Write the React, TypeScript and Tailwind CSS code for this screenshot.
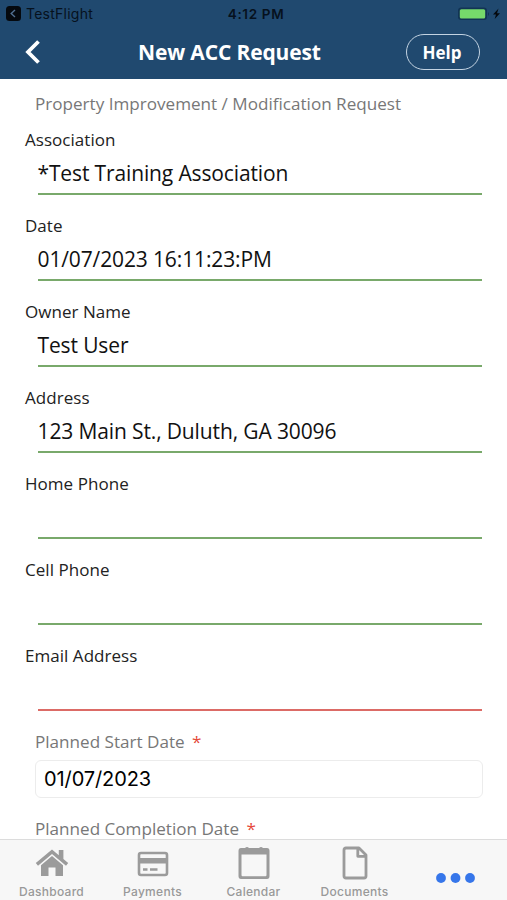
type FieldProps = { label: string; value: string; error?: boolean };

function Field({ label, value, error }: FieldProps) {
  return (
    <div className="flex h-[86px] flex-col">
      <div className="h-6 pl-[25px] text-[17px] leading-6 tracking-[0.04px] text-[#222]">{label}</div>
      <div
        className={`mr-[25px] ml-[37.5px] flex h-[43px] items-center border-b-2 text-[21px] leading-8 tracking-[-0.13px] text-[#111] ${
          error ? "border-[#dc6b66]" : "border-[#79a96b]"
        }`}
      >
        {value}
      </div>
    </div>
  );
}

const fields: FieldProps[] = [
  { label: "Association", value: "*Test Training Association" },
  { label: "Date", value: "01/07/2023 16:11:23:PM" },
  { label: "Owner Name", value: "Test User" },
  { label: "Address", value: "123 Main St., Duluth, GA 30096" },
  { label: "Home Phone", value: "" },
  { label: "Cell Phone", value: "" },
  { label: "Email Address", value: "", error: true },
];

function StatusBar() {
  return (
    <div className="flex h-[27px] items-center font-['Inter',sans-serif] text-[#06111d]">
      <div className="flex flex-1 items-center pl-[6px]">
        <svg width="15" height="15" viewBox="0 0 15 15">
          <rect width="15" height="15" rx="3.5" fill="#05090e" />
          <path d="M9 4 5.2 7.5 9 11" fill="none" stroke="#517092" strokeWidth="1.4" />
        </svg>
        <span className="ml-[5px] text-[14px] tracking-[0.25px]">TestFlight</span>
      </div>
      <span className="pt-px pl-[3px] text-[13.5px] font-semibold tracking-[0.65px]">4:12 PM</span>
      <div className="flex flex-1 justify-end pr-[4px]">
        <svg width="45" height="14" viewBox="0 0 45 14">
          <rect x="0" y="0.5" width="29" height="12.500" rx="3.2" fill="#123454" />
          <rect x="1.8" y="2.2" width="25.400" height="9.400" rx="1.6" fill="#76da6b" />
          <path d="M30 5q2 2 0 4z" fill="#123454" />
          <path d="M40.5 1.500 35 7.6h3L36.7 12 42 6.3h-3z" fill="#05090e" />
        </svg>
      </div>
    </div>
  );
}

function RequiredLabel({ text }: { text: string }) {
  return (
    <div className="pl-[35px] text-[17.1px] leading-6 whitespace-pre text-[#777]">
      {text} <span className="ml-[3px] text-[#e5493a]">*</span>
    </div>
  );
}

function HouseIcon() {
  return (
    <svg width="34" height="28" viewBox="0 0 34 28" fill="#9b9b9b">
      <path d="M.8 14 17 .6l6.8 5.6V1h4.6v9L33.2 14l-2.2 2.7L17 5 3 16.700z" />
      <path d="M6 16.200 17 7l11 9.200V27h-7.500v-8.500h-7V27H6z" />
    </svg>
  );
}

function CardIcon() {
  return (
    <svg className="mt-[2px]" width="32" height="26" viewBox="0 0 32 26">
      <rect x="2" y="2" width="28" height="22" rx="2" fill="none" stroke="#9b9b9b" strokeWidth="2.6" />
      <path d="M2 7h28v5.500H2z" fill="#9b9b9b" />
      <path d="M6 18.500h4.500M13 18.500h7.500" stroke="#9b9b9b" strokeWidth="2.400" />
    </svg>
  );
}

function CalendarIcon() {
  return (
    <svg width="34" height="34" viewBox="0 0 34 34" fill="#9b9b9b">
      <path d="M4 2h4q2-2 4 0h10q2-2 4 0h4q2.500 0 2.500 3v25q0 3-2.500 3H4q-2.500 0-2.500-3V5q0-3 2.500-3zM4.500 8.500v20.500q0 1.200 1 1.200h23q1 0 1-1.200V8.500z" />
    </svg>
  );
}

function DocumentIcon() {
  return (
    <svg width="26" height="34" viewBox="0 0 26 34" fill="none" stroke="#9b9b9b" strokeWidth="2.800" strokeLinejoin="round">
      <path d="M4 2h13l7 7v21q0 2-2 2H4q-2 0-2-2V4q0-2 2-2zM15.800 2.500V10.300H24" />
    </svg>
  );
}

const tabs = [
  { name: "Dashboard", Icon: HouseIcon },
  { name: "Payments", Icon: CardIcon },
  { name: "Calendar", Icon: CalendarIcon },
  { name: "Documents", Icon: DocumentIcon },
];

export default function App() {
  return (
    <div className="flex h-[900px] w-[507px] flex-col overflow-hidden bg-white font-['Open_Sans',sans-serif]">
      <header className="h-[79px] shrink-0 bg-[#20496f]">
        <StatusBar />
        <div className="flex h-[50px] items-center">
          <div className="w-[138px] shrink-0 pl-[25px]">
            <svg width="17" height="26" viewBox="0 0 17 26">
              <path d="M13.500 2.500 3 13l10.500 10.500" fill="none" stroke="white" strokeWidth="3.800" />
            </svg>
          </div>
          <h1 className="pt-px text-[21px] font-bold tracking-[-0.15px] whitespace-nowrap text-white">New ACC Request</h1>
          <div className="flex flex-1 justify-end pr-[27px]">
            <button className="h-9 w-[74px] rounded-full border-[1.500px] border-[#c3d3e2] pt-px pr-[2px] text-[17px] font-bold text-white">Help</button>
          </div>
        </div>
      </header>
      <main className="min-h-0 flex-1 overflow-hidden">
        <div className="mt-[13px] mb-[12px] pl-[35px] text-[17.1px] leading-6 whitespace-nowrap text-[#777]">
          Property Improvement / Modification Request
        </div>
        {fields.map((f) => (
          <Field key={f.label} {...f} />
        ))}
        <RequiredLabel text="Planned Start Date" />
        <div className="mt-[6px] mr-[24px] mb-[19px] ml-[35px] flex h-[38px] items-center rounded-[6px] border border-[#ececec] pl-2 font-['Inter',sans-serif] text-[20px] tracking-[-0.1px] text-black">
          01/07/2023
        </div>
        <RequiredLabel text="Planned Completion Date" />
      </main>
      <nav className="flex h-[61px] shrink-0 border-t border-[#dcdcdc] bg-[#f7f7f7] pl-px font-['Inter',sans-serif]">
        {tabs.map(({ name, Icon }) => (
          <div key={name} className="flex w-[101px] flex-col items-center">
            <div className="flex h-[46px] items-center">
              <Icon />
            </div>
            <span className="text-[12px] leading-[12px] font-medium tracking-[0.28px] text-[#999]">{name}</span>
          </div>
        ))}
        <div className="flex w-[102px] items-center justify-center pt-[15px]">
          <svg width="40" height="10" viewBox="0 0 40 10" fill="#3676ea">
            <circle cx="5" cy="5" r="4.900" />
            <circle cx="19.500" cy="5" r="4.900" />
            <circle cx="34" cy="5" r="4.900" />
          </svg>
        </div>
      </nav>
    </div>
  );
}
